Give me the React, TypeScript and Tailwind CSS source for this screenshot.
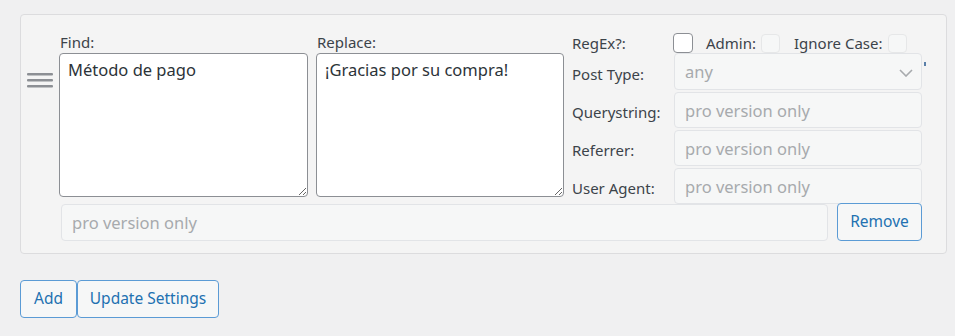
const font = { fontFamily: '"Noto Sans", "Open Sans", sans-serif' };

const DragHandle = () => (
  <svg width="26" height="16" viewBox="0 0 26 16" className="mt-[39px] ml-[6px]">
    <rect x="0" y="1" width="26" height="2.5" rx="1" fill="#8c8f94" />
    <rect x="0" y="7" width="26" height="2.5" rx="1" fill="#8c8f94" />
    <rect x="0" y="13" width="26" height="2.5" rx="1" fill="#8c8f94" />
  </svg>
);

const TextField = ({ label, value }: { label: string; value: string }) => (
  <div className="flex flex-col">
    <label className="h-[20px] pl-[1px] text-[15px] leading-[19px] text-[#3c434a]">{label}</label>
    <textarea
      readOnly
      defaultValue={value}
      className="h-[144px] rounded-[4px] border border-[#8c8f94] bg-white px-[8px] py-[4px] text-[16.5px] leading-[24px] text-[#2c3338] outline-none"
    />
  </div>
);

const ProInput = ({ className }: { className?: string }) => (
  <input
    disabled
    placeholder="pro version only"
    className={
      "rounded-[4px] border border-[#e2e4e7] bg-[#f6f7f7] px-[10px] text-[16.5px] text-[#a7aaad] placeholder:text-[#a7aaad] outline-none " +
      (className ?? "")
    }
  />
);

const FieldRow = ({ label, children }: { label: string; children: React.ReactNode }) => (
  <div className="flex items-center">
    <span className="w-[102px] pt-[5px] text-[15px] text-[#3c434a]">{label}</span>
    {children}
  </div>
);

export default function App() {
  return (
    <div className="min-h-[336px] bg-[#f0f0f1] pl-[20px] pt-[14px]" style={font}>
      <div className="h-[240px] w-[927px] rounded-[4px] border border-[#dcdcde] bg-[#f4f4f4] pt-[18px]">
        <div className="flex h-[170px] items-start">
          <div className="w-[38px] shrink-0">
            <DragHandle />
          </div>
          <div className="w-[249px] shrink-0">
            <TextField label="Find:" value="Método de pago" />
          </div>
          <div className="ml-[8px] w-[248px] shrink-0">
            <TextField label="Replace:" value="¡Gracias por su compra!" />
          </div>
          <div className="ml-[8px] w-[355px] shrink-0">
            <div className="flex h-[20px] items-center text-[15px] text-[#3c434a]">
              <span className="w-[101px] pt-[1px]">RegEx?:</span>
              <span className="h-[20px] w-[20px] rounded-[4px] border border-[#8c8f94] bg-white" />
              <span className="ml-[13px] pt-[1px]">Admin:</span>
              <span className="ml-[5px] h-[19px] w-[19px] rounded-[4px] border border-[#e6e7e8] bg-[#f6f7f7]" />
              <span className="ml-[14px] pt-[1px]">Ignore Case:</span>
              <span className="ml-[6px] h-[19px] w-[19px] rounded-[4px] border border-[#e6e7e8] bg-[#f6f7f7]" />
            </div>
            <FieldRow label="Post Type:">
              <div className="relative h-[37px] w-[248px] rounded-[4px] border border-[#e2e4e7] bg-[#f6f7f7]">
                <span className="absolute left-[10px] top-[6px] text-[16.5px] text-[#a7aaad]">any</span>
                <svg width="14" height="8" viewBox="0 0 14 8" className="absolute right-[8px] top-[15px]">
                  <path d="M1 1l6 6 6-6" fill="none" stroke="#a7aaad" strokeWidth="1.6" />
                </svg>
              </div>
              <span className="ml-[2px] mb-[16px] h-[4px] w-[2px] bg-[#5a7fa8]" />
            </FieldRow>
            <div className="mt-[2px]">
              <FieldRow label="Querystring:">
                <ProInput className="h-[36px] w-[248px]" />
              </FieldRow>
            </div>
            <div className="mt-[2px]">
              <FieldRow label="Referrer:">
                <ProInput className="h-[36px] w-[248px]" />
              </FieldRow>
            </div>
            <div className="mt-[2px]">
              <FieldRow label="User Agent:">
                <ProInput className="h-[36px] w-[248px]" />
              </FieldRow>
            </div>
          </div>
        </div>
        <div className="ml-[40px] flex items-center">
          <ProInput className="h-[37px] w-[767px]" />
          <button className="ml-[9px] h-[38px] w-[85px] rounded-[4px] border border-[#5b9bd5] bg-[#f6f7f7] text-[15.5px] text-[#2271b1]">
            Remove
          </button>
        </div>
      </div>
      <div className="mt-[26px] flex">
        <button className="h-[38px] w-[57px] rounded-[4px] border border-[#5b9bd5] bg-[#f6f7f7] text-[15.5px] text-[#2271b1]">
          Add
        </button>
        <button className="h-[38px] w-[142px] rounded-[4px] border border-[#5b9bd5] bg-[#f6f7f7] text-[15.5px] text-[#2271b1]">
          Update Settings
        </button>
      </div>
    </div>
  );
}
